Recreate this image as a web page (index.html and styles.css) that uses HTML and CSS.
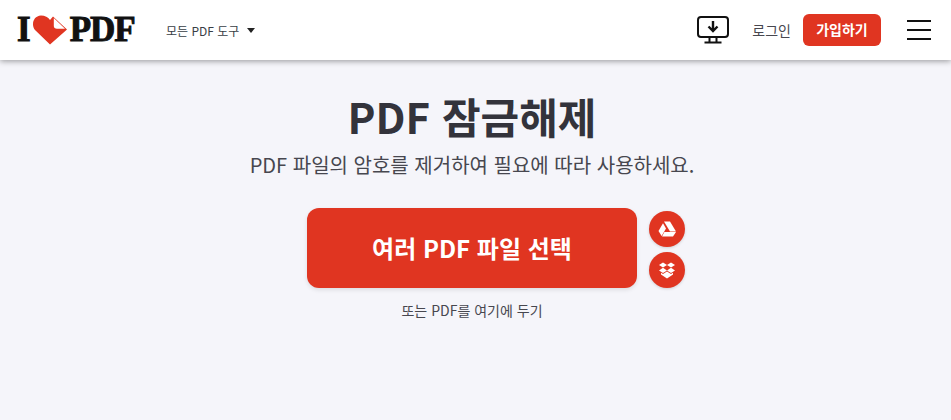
FILE: index.html
```html
<!DOCTYPE html>
<html lang="ko">
<head>
    <meta charset="UTF-8">
    <meta name="viewport" content="width=device-width, initial-scale=1.0">
    <title>PDF 잠금해제</title>
    <link rel="stylesheet" href="styles.css">
</head>
<body>

    <header class="header">
        <a class="logo" href="#">
            <span class="logo-text">I</span>
            <svg class="logo-heart" width="34" height="30" viewBox="0 0 34 30">
                <path d="M17 29.5 L2 15 C-2 10 0 1 8 .5 C12 .5 15 2 17 5 L20 1.5 L34 14.5 Z" fill="#e03521"/>
                <path d="M20.8 3 L32 13.8 L24 13.8 Q20.8 13.8 20.8 10.8 Z" fill="#fff"/>
            </svg>
            <span class="logo-text logo-pdf">PDF</span>
        </a>
        <div class="tools-menu">모든 PDF 도구<span class="caret"></span></div>
        <div class="header-right">
            <svg class="desktop-icon" width="32" height="28" viewBox="0 0 32 28" fill="none" stroke="#111" stroke-width="2">
                <rect x="1" y="1" width="30" height="20" rx="3"/>
                <path d="M16 5 V14.5 M11.5 10.5 L16 15 L20.5 10.5" stroke-width="2.4"/>
                <path d="M12.5 21 V26.5 M19.5 21 V26.5 M7.5 26.5 H24.5"/>
            </svg>
            <a class="login" href="#">로그인</a>
            <a class="signup" href="#">가입하기</a>
            <div class="burger"><span></span><span></span><span></span></div>
        </div>
    </header>

    <main class="main">
        <h1>PDF 잠금해제</h1>
        <p class="subtitle">PDF 파일의 암호를 제거하여 필요에 따라 사용하세요.</p>
        <div class="upload">
            <a class="pick-btn" href="#">여러 PDF 파일 선택</a>
            <div class="cloud-btns">
                <a class="cloud" href="#">
                    <svg width="18" height="16" viewBox="0 0 18 16" fill="#fff">
                        <path d="M6 .5 H12 L18 10.5 H12 Z"/>
                        <path d="M5 2.2 L8 7.4 L3.6 15 L.5 10 Z"/>
                        <path d="M6.4 10.9 H18 L15 15.5 H4 Z"/>
                    </svg>
                </a>
                <a class="cloud" href="#">
                    <svg width="18" height="17" viewBox="0 0 18 17" fill="#fff">
                        <path d="M5 .5 L9 3 L5 5.6 L1 3 Z"/>
                        <path d="M13 .5 L17 3 L13 5.6 L9 3 Z"/>
                        <path d="M5 5.8 L9 8.4 L5 11 L1 8.4 Z"/>
                        <path d="M13 5.8 L17 8.4 L13 11 L9 8.4 Z"/>
                        <path d="M9 9.4 L13 12 L15 10.8 V12.6 L9 16.5 L3 12.6 V10.8 L5 12 Z"/>
                    </svg>
                </a>
            </div>
        </div>
        <p class="drop-hint">또는 PDF를 여기에 두기</p>
    </main>

</body>
</html>
```

FILE: styles.css
```css
* { box-sizing: border-box; }
body {
    margin: 0;
    height: 420px;
    overflow: hidden;
    background-color: #f5f5fa;
    color: #33333b;
    font-family: "Noto Sans CJK KR", "Noto Sans", sans-serif;
}
a { text-decoration: none; color: inherit; }

.header {
    display: flex;
    align-items: center;
    height: 60px;
    padding: 0 20px 0 17px;
    background-color: #fff;
    box-shadow: 0 1px 6px rgba(0, 0, 0, 0.4);
}
.logo { display: flex; align-items: center; width: 149px; }
.logo-text {
    font-family: "Liberation Serif", serif;
    font-weight: 700;
    font-size: 35px;
    line-height: 36px;
    color: #111;
    -webkit-text-stroke: 1px #111;
}
.logo-pdf { letter-spacing: -1px; }
.logo-heart { margin: -1px 3px 0 2px; }
.tools-menu { display: flex; align-items: center; font-size: 12px; color: #383e45; }
.caret {
    margin-left: 8px;
    border-left: 4.5px solid transparent;
    border-right: 4.5px solid transparent;
    border-top: 5px solid #222;
}
.header-right { display: flex; align-items: center; margin-left: auto; }
.desktop-icon { margin-right: 23px; }
.login { font-size: 14px; color: #47474f; margin-right: 12px; }
.signup {
    width: 78px;
    height: 32px;
    line-height: 31px;
    text-align: center;
    border-radius: 6px;
    background-color: #e03521;
    color: #fff;
    font-size: 14px;
    font-weight: 700;
    margin-right: 26px;
}
.burger { display: flex; flex-direction: column; gap: 7px; width: 24px; }
.burger span { height: 2px; background-color: #111; }

.main { display: flex; flex-direction: column; align-items: center; padding-right: 7px; }
h1 {
    margin: 28px 0 0;
    font-size: 42px;
    line-height: 56px;
    font-weight: 700;
}
.subtitle { margin: 7px 0 0; font-size: 20px; line-height: 28px; color: #47474f; }
.upload { position: relative; margin-top: 29px; }
.pick-btn {
    display: block;
    width: 330px;
    height: 80px;
    line-height: 80px;
    text-align: center;
    border-radius: 12px;
    background-color: #e03521;
    color: #fff;
    font-size: 24px;
    font-weight: 700;
    box-shadow: 0 2px 4px rgba(0, 0, 0, 0.1);
}
.cloud-btns {
    position: absolute;
    left: 342px;
    top: 3px;
    display: flex;
    flex-direction: column;
    gap: 5px;
}
.cloud {
    display: flex;
    align-items: center;
    justify-content: center;
    width: 36px;
    height: 36px;
    border-radius: 50%;
    background-color: #e03521;
    box-shadow: 0 1px 3px rgba(0, 0, 0, 0.15);
}
.drop-hint { margin: 12px 0 0; font-size: 14px; line-height: 20px; color: #47474f; }
```
